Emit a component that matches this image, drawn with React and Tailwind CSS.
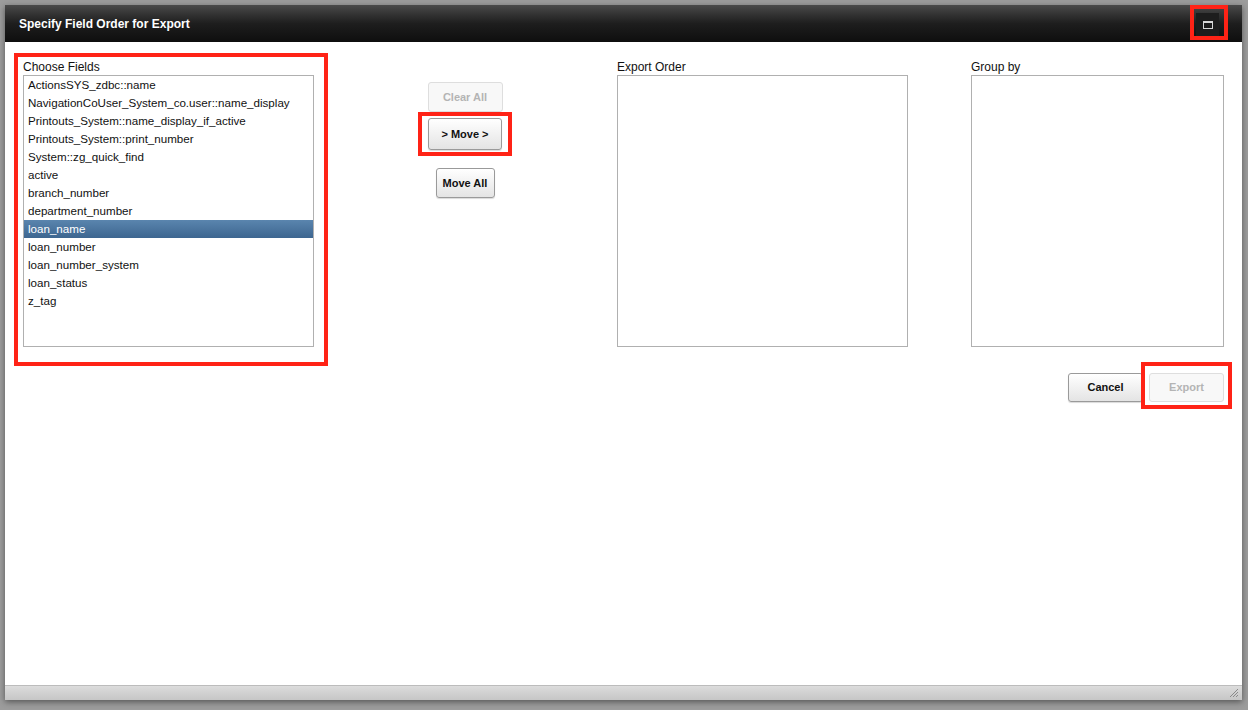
import React from "react";

const fields = [
  "ActionsSYS_zdbc::name",
  "NavigationCoUser_System_co.user::name_display",
  "Printouts_System::name_display_if_active",
  "Printouts_System::print_number",
  "System::zg_quick_find",
  "active",
  "branch_number",
  "department_number",
  "loan_name",
  "loan_number",
  "loan_number_system",
  "loan_status",
  "z_tag",
];

const btn =
  "flex items-center justify-center rounded-[3px] border text-[11px] font-bold";
const btnOn =
  btn + " border-[#9a9a9a] bg-gradient-to-b from-white to-[#e4e4e4] text-[#111] shadow-[0_1px_1px_rgba(0,0,0,0.15)]";
const btnOff = btn + " border-[#dedede] bg-[#f8f8f8] text-[#b4b4b4]";

function Highlight({ className, children }) {
  return <div className={"border-4 border-[#ff2316] " + className}>{children}</div>;
}

export default function App() {
  const selected = "loan_name";

  return (
    <div
      className="w-[1248px] h-[710px] bg-[#9c9c9c] p-[5px] overflow-hidden"
      style={{ fontFamily: '"Liberation Sans", Arial, sans-serif' }}
    >
      <div className="w-[1237px] h-[695px] flex flex-col bg-white shadow-[0_2px_6px_rgba(0,0,0,0.45)]">
        {/* title bar */}
        <div className="h-[37px] flex items-center justify-between bg-gradient-to-b from-[#4a4a4a] via-[#1e1e1e] to-[#0e0e0e] pl-[14px] pr-[14px]">
          <span className="text-white text-[12px] font-bold mt-px">Specify Field Order for Export</span>
          <Highlight className="w-[38px] h-[35px] -mt-[2px] flex items-center justify-center">
            <div className="w-[23px] h-[23px] bg-[#1d1d1d] flex items-center justify-center mt-[4px] -ml-[3px]">
              <div className="w-[10px] h-[8px] border border-t-2 border-[#d8d8d8]"></div>
            </div>
          </Highlight>
        </div>

        {/* body */}
        <div className="flex-1 flex items-start">
          <Highlight className="ml-[9px] mt-[11px] w-[314px] h-[313px] pl-[5px] pt-[4px]">
            <div className="text-[12px] leading-[13px] text-[#111]">Choose Fields</div>
            <div className="mt-px w-[291px] h-[272px] border border-[#b0b0b0]">
              {fields.map((f) => (
                <div
                  key={f}
                  className={
                    "h-[18px] leading-[18px] pl-[4px] text-[11.6px] " +
                    (f === selected
                      ? "bg-gradient-to-b from-[#5a85ae] to-[#3d6690] text-white"
                      : "text-[#111]")
                  }
                >
                  {f}
                </div>
              ))}
            </div>
          </Highlight>

          <div className="ml-[90px] mt-[40px] w-[94px] flex flex-col items-center">
            <div className={btnOff + " w-[75px] h-[30px]"}>Clear All</div>
            <Highlight className="w-[94px] h-[44px] flex items-center justify-center">
              <div className={btnOn + " w-[74px] h-[32px]"}>&gt; Move &gt;</div>
            </Highlight>
            <div className={btnOn + " mt-[12px] w-[59px] h-[30px]"}>Move All</div>
          </div>

          <div className="ml-[105px] mt-[19px] flex flex-col">
            <div className="flex">
              <div>
                <div className="text-[12px] leading-[13px] text-[#111]">Export Order</div>
                <div className="mt-px w-[291px] h-[272px] border border-[#b0b0b0]"></div>
              </div>
              <div className="ml-[63px]">
                <div className="text-[12px] leading-[13px] text-[#111]">Group by</div>
                <div className="mt-px w-[253px] h-[272px] border border-[#b0b0b0]"></div>
              </div>
            </div>
            <div className="mt-[15px] -mr-[8px] flex justify-end items-start">
              <div className={btnOn + " mt-[11px] -mr-[2px] w-[75px] h-[29px] text-[11px]"}>Cancel</div>
              <Highlight className="w-[91px] h-[47px] pl-[4px] pt-[7px]">
                <div className={btnOff + " w-[75px] h-[29px]"}>Export</div>
              </Highlight>
            </div>
          </div>
        </div>

        {/* footer with resize grip */}
        <div className="h-[15px] border-t border-[#bcbcbc] bg-gradient-to-b from-[#dcdcdc] to-[#c6c6c6] flex justify-end items-end pr-[3px] pb-[2px]">
          <svg width="10" height="10" viewBox="0 0 10 10">
            <path d="M1 9 L9 1 M4 9 L9 4 M7 9 L9 7" stroke="#8a8a8a" strokeWidth="1" />
          </svg>
        </div>
      </div>
    </div>
  );
}
